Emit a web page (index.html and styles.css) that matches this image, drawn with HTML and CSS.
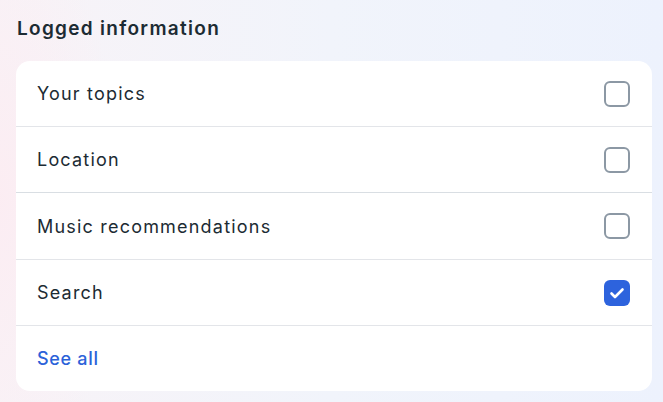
FILE: index.html
```html
<!DOCTYPE html>
<html lang="en">
<head>
<meta charset="utf-8">
<link rel="stylesheet" href="styles.css">
</head>
<body>
<main class="page">
  <h2 class="title">Logged information</h2>
  <section class="card">
    <div class="row">
      <span class="label">Your topics</span>
      <span class="box"></span>
    </div>
    <div class="row">
      <span class="label">Location</span>
      <span class="box"></span>
    </div>
    <div class="row row-strong">
      <span class="label">Music recommendations</span>
      <span class="box"></span>
    </div>
    <div class="row">
      <span class="label">Search</span>
      <span class="box box-checked">
        <svg viewBox="0 0 26 26" width="26" height="26"><path d="M7.5 13.5 L11 17 L18.5 9.5" fill="none" stroke="#fff" stroke-width="2.6" stroke-linecap="round" stroke-linejoin="round"/></svg>
      </span>
    </div>
    <div class="row row-last">
      <a class="see-all" href="#">See all</a>
    </div>
  </section>
</main>
</body>
</html>
```
FILE: styles.css
```css
html, body {
  margin: 0;
  padding: 0;
}
body {
  width: 663px;
  height: 402px;
  overflow: hidden;
  font-family: Inter, "Noto Sans", sans-serif;
  background:
    radial-gradient(ellipse 120px 300px at 0 200px, rgba(252, 236, 242, 0.9), rgba(252, 236, 242, 0)),
    linear-gradient(90deg, #f8f3f7 0%, #f1f4fb 50%, #edf2fd 100%);
}
.page {
  padding: 16px 11px 0 16px;
}
.title {
  margin: 0 0 19px 1px;
  font-size: 19px;
  line-height: 26px;
  font-weight: 600;
  letter-spacing: 1.3px;
  color: #1c2b33;
}
.card {
  background: #fff;
  border-radius: 14px;
  overflow: hidden;
}
.row {
  display: flex;
  align-items: center;
  justify-content: space-between;
  height: 65px;
  padding: 0 22px 0 21px;
  border-bottom: 1px solid #e3e5e9;
}
.row-strong {
  border-top: 1px solid #d9dee3;
  margin-top: -1px;
  height: 66px;
}
.row-last {
  border-bottom: none;
  height: 65px;
}
.label {
  font-size: 18px;
  font-weight: 400;
  letter-spacing: 1.2px;
  color: #1c2b33;
}
.box {
  box-sizing: border-box;
  width: 26px;
  height: 26px;
  border: 2px solid #8c98a4;
  border-radius: 6px;
  display: flex;
}
.box-checked {
  background: #2d63dd;
  border: none;
}
.see-all {
  font-size: 18px;
  font-weight: 500;
  letter-spacing: 0.7px;
  color: #2b62d9;
  text-decoration: none;
}
```
